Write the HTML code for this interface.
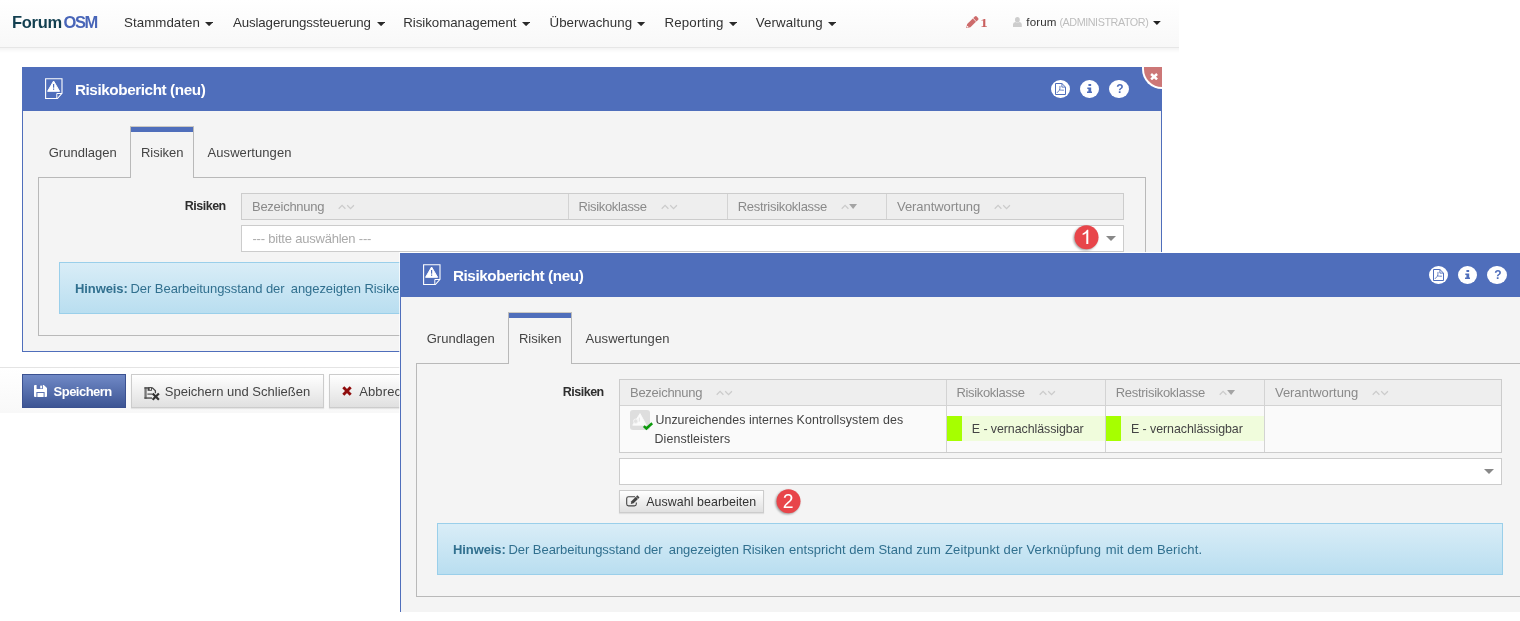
<!DOCTYPE html>
<html lang="de">
<head>
<meta charset="utf-8">
<title>ForumOSM - Risikobericht (neu)</title>
<style>
html,body{margin:0;padding:0;background:#fff}
body{width:1520px;height:621px;position:relative;overflow:hidden;font-family:"Liberation Sans",sans-serif}
.a{position:absolute;box-sizing:border-box;margin:0;padding:0}
.t{position:absolute;white-space:nowrap;line-height:1;display:block}
#shot1{will-change:transform;left:0;top:0;width:1179px;height:413px;overflow:hidden;background:#fff}
#shot2{will-change:transform;left:399px;top:252px;width:1121px;height:360px;overflow:hidden;background:#f4f4f4;background-clip:padding-box;border-left:1px solid rgba(255,255,255,.7);border-top:1px solid rgba(255,255,255,.95)}
.navbar{left:-10px;top:0;width:1210px;height:48px;background:linear-gradient(#fff,#f8f8f8);border-bottom:1px solid #e6e6e6;box-shadow:0 1px 5px rgba(0,0,0,.075)}
.panel{background:#f4f4f4;border:1px solid #4f6ebb;border-top:0;box-sizing:content-box}
.phead{background:#4f6ebb}
.circ{border-radius:50%;background:#fff}
.xbtn{width:20px;height:22px;background:#cc7777;border:2px solid #fff;border-top:0;border-right:0;border-radius:0 0 0 20px}
.cbox{border:1px solid #b9b9b9;box-sizing:content-box}
.tab{width:64px;height:52px;background:#f4f4f4;border:1px solid #b9b9b9;border-top-color:#cbc8c2;border-bottom:0}
.tab::before{content:"";display:block;height:5px;background:#4f6ebb}
.tbl{border:1px solid #ccc;background:#fafafa;box-sizing:content-box}
.thead{background:#eee}
.vsep{width:1px;background:#d3d3d3}
.hsep{height:1px;background:#d3d3d3}
.sel{width:883px;height:27px;background:#fff;border:1px solid #ccc}
.alert{background:linear-gradient(#d9edf7,#b9def0);border:1px solid #9acfea;box-sizing:content-box}
.bdg{overflow:visible;filter:drop-shadow(-0.5px 1.5px 1.2px rgba(0,0,0,.38))}
.fbar{left:0;top:367px;width:1179px;height:46px;background:linear-gradient(#fff,#f8f8f8);border-top:1px solid #e4e4e4}
.btn,.btnp{font-family:inherit;padding:0;text-align:left;overflow:hidden}
.btn{background:linear-gradient(#fff,#e0e0e0);border:1px solid #ccc;box-shadow:0 1px 1px rgba(0,0,0,.08)}
.btnp{background:linear-gradient(#7089c6,#3d5594);border:1px solid #3b5190}
.ricon{width:20px;height:20px;background:#dedede;border-radius:3px}
.rk{width:158px;height:25px;background:#f0fcdc}
.rkbar{width:15px;height:25px;background:#a6ff00}
</style>
</head>
<body>
<main class="a" id="shot1">
<nav>
<div class="a navbar"></div>
<span class="t" style="left:12.10px;top:13.60px;font-size:16.5px;font-weight:bold;color:#123f50;letter-spacing:-0.318px">Forum</span>
<span class="t" style="left:63.60px;top:13.60px;font-size:16.5px;font-weight:bold;color:#4865b8;letter-spacing:-1.425px">OSM</span>
<span class="t" style="left:124.00px;top:16.00px;font-size:13.3px;color:#333;letter-spacing:0.056px">Stammdaten</span>
<svg class="a" style="left:205px;top:21.8px" width="8.2" height="4.2" viewBox="0 0 8.2 4.2"><path d="M0 0H8.2L4.1 4.2Z" fill="#2a2a2a"/></svg>
<span class="t" style="left:233.00px;top:16.00px;font-size:13.3px;color:#333;letter-spacing:-0.129px">Auslagerungssteuerung</span>
<svg class="a" style="left:376.5px;top:21.8px" width="8.2" height="4.2" viewBox="0 0 8.2 4.2"><path d="M0 0H8.2L4.1 4.2Z" fill="#2a2a2a"/></svg>
<span class="t" style="left:403.25px;top:16.00px;font-size:13.3px;color:#333;letter-spacing:-0.042px">Risikomanagement</span>
<svg class="a" style="left:522.3px;top:21.8px" width="8.2" height="4.2" viewBox="0 0 8.2 4.2"><path d="M0 0H8.2L4.1 4.2Z" fill="#2a2a2a"/></svg>
<span class="t" style="left:549.50px;top:16.00px;font-size:13.3px;color:#333;letter-spacing:0.058px">Überwachung</span>
<svg class="a" style="left:637.4px;top:21.8px" width="8.2" height="4.2" viewBox="0 0 8.2 4.2"><path d="M0 0H8.2L4.1 4.2Z" fill="#2a2a2a"/></svg>
<span class="t" style="left:664.50px;top:16.00px;font-size:13.3px;color:#333;letter-spacing:0.155px">Reporting</span>
<svg class="a" style="left:728.5px;top:21.8px" width="8.2" height="4.2" viewBox="0 0 8.2 4.2"><path d="M0 0H8.2L4.1 4.2Z" fill="#2a2a2a"/></svg>
<span class="t" style="left:755.70px;top:16.00px;font-size:13.3px;color:#333;letter-spacing:0.133px">Verwaltung</span>
<svg class="a" style="left:827.6px;top:21.8px" width="8.2" height="4.2" viewBox="0 0 8.2 4.2"><path d="M0 0H8.2L4.1 4.2Z" fill="#2a2a2a"/></svg>
<svg class="a" style="left:966px;top:15.7px" width="13" height="12.4" viewBox="0 0 13 12.4"><g transform="translate(0.2 12.1) rotate(-44)" fill="#cd6b6b"><path d="M0 0L3.6 -2.3H11.4V2.3H3.6Z"/><path d="M12 -2.3H14.2Q15.6 -2.3 15.6 -0.9V0.9Q15.6 2.3 14.2 2.3H12Z"/><circle cx="1.9" cy="0" r="0.75" fill="#fff"/></g></svg>
<span class="t" style="left:981.35px;top:17.20px;font-size:12.4px;font-weight:bold;font-family:'Liberation Serif', serif;color:#c9605f;letter-spacing:0.000px;transform:scaleX(1.22);transform-origin:50% 50%">1</span>
<svg class="a" style="left:1013px;top:17px" width="9" height="10" viewBox="0 0 9 10"><ellipse cx="4.4" cy="2.7" rx="2.4" ry="2.7" fill="#cdcdcd"/><path d="M0 9.9V7.6Q0 5.2 2.4 4.9Q4.4 6.3 6.4 4.9Q8.8 5.2 8.8 7.6V9.9Z" fill="#cdcdcd"/></svg>
<span class="t" style="left:1026.30px;top:16.00px;font-size:11.6px;color:#333;letter-spacing:0.129px">forum</span>
<span class="t" style="left:1059.40px;top:17.00px;font-size:10.8px;color:#bdbdbd;letter-spacing:-0.442px">(ADMINISTRATOR)</span>
<svg class="a" style="left:1153.2px;top:21.1px" width="7.8" height="4" viewBox="0 0 7.8 4"><path d="M0 0H7.8L3.9 4Z" fill="#222"/></svg>
</nav>
<section>
<div class="a panel" style="left:22px;top:110px;width:1138px;height:241px"></div>
<div class="a phead" style="left:22px;top:67px;width:1140px;height:44px"></div>
<svg class="a" style="left:45px;top:78px" width="18" height="22" viewBox="0 0 18 22"><path d="M0.6 0.7H17V15.4L12.4 20.5H0.6Z" fill="none" stroke="#fff" stroke-width="1.1"/><path d="M17 15.5H11.8V20" fill="none" stroke="#fff" stroke-width="1"/><path d="M8.6 3L14.6 13.3H2.6Z" fill="#fff" stroke="#fff" stroke-width="1" stroke-linejoin="round"/><rect x="8" y="6" width="1.2" height="3.7" fill="#4f6ebb"/><rect x="8" y="10.5" width="1.2" height="1.3" fill="#4f6ebb"/></svg>
<span class="t" style="left:74.90px;top:81.80px;font-size:15.3px;font-weight:bold;color:#fff;letter-spacing:-0.425px">Risikobericht (neu)</span>
<div class="a circ" style="left:1050.7px;top:79.65px;width:19.4px;height:18.6px"></div>
<div class="a circ" style="left:1079.7px;top:79.65px;width:19.4px;height:18.6px"></div>
<div class="a circ" style="left:1108.95px;top:79.65px;width:20px;height:18.6px"></div>
<svg class="a" style="left:1055px;top:83px" width="11" height="12" viewBox="0 0 11 12"><path d="M0.5 0.5H6.9L10.5 4.1V11.5H0.5Z" fill="none" stroke="#4f6ebb" stroke-width="1"/><path d="M6.9 0.5V4.1H10.5" fill="none" stroke="#4f6ebb" stroke-width="0.9"/><path d="M1.9 9.9L4.4 7.2Q5.1 5.6 5 2.9M4.6 6.9Q6.4 7.3 8.9 7.2" fill="none" stroke="#4f6ebb" stroke-width="0.85"/></svg>
<svg class="a" style="left:1086.9px;top:83.8px" width="5.4" height="9.3" viewBox="0 0 5.4 9.3"><rect x="1.4" y="0" width="2.8" height="1.9" rx="0.3" fill="#4f6ebb"/><path d="M0.3 3.5H4.2V7.5H5.4V9.3H0V7.5H1.4V5.1H0.3Z" fill="#4f6ebb"/></svg>
<span class="t" style="left:1116.27px;top:83.06px;font-size:12px;font-weight:bold;color:#4f6ebb;letter-spacing:0.000px">?</span>
<div class="a xbtn" style="left:1142px;top:67px"></div>
<svg class="a" style="left:1150px;top:72.9px" width="8.2" height="7.4" viewBox="0 0 8.2 7.4"><path d="M1.1 1L7.1 6.4M7.1 1L1.1 6.4" stroke="#fff" stroke-width="2.5"/></svg>
<div class="a cbox" style="left:38px;top:177px;width:1106px;height:157px"></div>
<div class="a tab" style="left:130px;top:126px"></div>
<span class="t" style="left:48.75px;top:146.00px;font-size:13px;color:#444;letter-spacing:0.003px">Grundlagen</span>
<span class="t" style="left:141.00px;top:146.00px;font-size:13px;color:#444;letter-spacing:-0.024px">Risiken</span>
<span class="t" style="left:207.50px;top:146.00px;font-size:13px;color:#444;letter-spacing:0.078px">Auswertungen</span>
<span class="t" style="left:184.80px;top:200.00px;font-size:12.5px;font-weight:bold;color:#2e2e2e;letter-spacing:-0.506px">Risiken</span>
<div class="a tbl" style="left:241px;top:193px;width:881px;height:25px"></div>
<div class="a thead" style="left:242px;top:194px;width:881px;height:25px"></div>
<div class="a vsep" style="left:568px;top:194px;height:25px"></div>
<div class="a vsep" style="left:727px;top:194px;height:25px"></div>
<div class="a vsep" style="left:886px;top:194px;height:25px"></div>
<span class="t" style="left:252.00px;top:200.00px;font-size:13px;color:#8a8a8a;letter-spacing:-0.269px">Bezeichnung</span>
<svg class="a" style="left:337.5px;top:201px" width="17" height="10" viewBox="0 0 17 10"><path d="M0.7 7.7L4.05 4.3L7.4 7.7" fill="none" stroke="#cbcbcb" stroke-width="1.25"/><path d="M9.2 4.3L12.55 7.7L15.9 4.3" fill="none" stroke="#cbcbcb" stroke-width="1.25"/></svg>
<span class="t" style="left:578.50px;top:200.00px;font-size:13px;color:#8a8a8a;letter-spacing:-0.343px">Risikoklasse</span>
<svg class="a" style="left:661px;top:201px" width="17" height="10" viewBox="0 0 17 10"><path d="M0.7 7.7L4.05 4.3L7.4 7.7" fill="none" stroke="#cbcbcb" stroke-width="1.25"/><path d="M9.2 4.3L12.55 7.7L15.9 4.3" fill="none" stroke="#cbcbcb" stroke-width="1.25"/></svg>
<span class="t" style="left:737.75px;top:200.00px;font-size:13px;color:#8a8a8a;letter-spacing:-0.296px">Restrisikoklasse</span>
<svg class="a" style="left:841px;top:201px" width="17" height="10" viewBox="0 0 17 10"><path d="M0.7 7.7L4.05 4.3L7.4 7.7" fill="none" stroke="#cbcbcb" stroke-width="1.25"/><path d="M8.1 2.9H16.05L12.1 7.9Z" fill="#a4a4a4"/></svg>
<span class="t" style="left:897.00px;top:200.00px;font-size:13px;color:#8a8a8a;letter-spacing:-0.051px">Verantwortung</span>
<svg class="a" style="left:993.5px;top:201px" width="17" height="10" viewBox="0 0 17 10"><path d="M0.7 7.7L4.05 4.3L7.4 7.7" fill="none" stroke="#cbcbcb" stroke-width="1.25"/><path d="M9.2 4.3L12.55 7.7L15.9 4.3" fill="none" stroke="#cbcbcb" stroke-width="1.25"/></svg>
<div class="a sel" style="left:241px;top:225px"></div>
<span class="t" style="left:252.50px;top:231.50px;font-size:13px;color:#aaa;letter-spacing:-0.214px">--- bitte auswählen ---</span>
<svg class="a" style="left:1106.3px;top:236.3px" width="10" height="5" viewBox="0 0 10 5"><path d="M0 0H10L5 5Z" fill="#888"/></svg>
<div class="a alert" style="left:59px;top:262px;width:1064px;height:50px"></div>
<span class="t" style="left:75.00px;top:282.00px;font-size:13px;font-weight:bold;color:#31708f;letter-spacing:-0.091px">Hinweis:</span>
<span class="t" style="left:130.50px;top:282.00px;font-size:13px;color:#31708f;letter-spacing:-0.054px">Der Bearbeitungsstand der</span>
<span class="t" style="left:290.75px;top:282.00px;font-size:13px;color:#31708f;letter-spacing:-0.061px">angezeigten Risiken</span>
<span class="t" style="left:411.00px;top:282.00px;font-size:13px;color:#31708f;letter-spacing:0.035px">entspricht dem Stand zum</span>
<span class="t" style="left:567.00px;top:282.00px;font-size:13px;color:#31708f;letter-spacing:0.145px">Zeitpunkt der Verknüpfung</span>
<span class="t" style="left:727.75px;top:282.00px;font-size:13px;color:#31708f;letter-spacing:0.163px">mit dem Bericht.</span>
<svg class="a bdg" style="left:1072px;top:223px" width="30" height="31" viewBox="0 0 30 31"><circle cx="14.50" cy="14.30" r="12.00" fill="#e8454a"/><path transform="translate(10.60 6.70)" d="M5.7 14.2H3.7V3.2Q2.4 4.5 0 5.4V3.7Q3.2 2.3 4.5 0H5.7Z" fill="#fff"/></svg>
</section>
<footer>
<div class="a fbar"></div>
<button class="a btnp" style="left:22px;top:374px;width:104px;height:34px">
<svg class="a" style="left:11px;top:10px" width="13" height="12" viewBox="0 0 13 12"><path d="M0 1Q0 0 1 0H9.8L13 3V11Q13 12 12 12H1Q0 12 0 11Z" fill="#fff"/><rect x="2.6" y="0" width="6.2" height="4" fill="#5a72b2"/><rect x="6.2" y="0.6" width="1.8" height="2.8" fill="#fff"/><rect x="2.4" y="7" width="8.2" height="5" fill="#5a72b2"/><rect x="3.4" y="8" width="6.2" height="4" fill="#fff"/></svg>
<span class="t" style="left:30.60px;top:9.80px;font-size:13px;font-weight:bold;color:#fff;letter-spacing:-0.527px">Speichern</span>
</button>
<button class="a btn" style="left:131px;top:374px;width:193px;height:34px">
<svg class="a" style="left:12px;top:12px" width="16" height="14" viewBox="0 0 16 14"><rect x="0.4" y="0.3" width="2.3" height="11.4" fill="#777"/><rect x="0.4" y="0.3" width="8.4" height="1.3" fill="#444"/><path d="M8.5 0.9L11.4 3.7V6.2" fill="none" stroke="#444" stroke-width="1.3"/><rect x="3.6" y="0.3" width="4.3" height="3.5" fill="#444"/><rect x="5.7" y="1" width="1.2" height="2" fill="#eee"/><rect x="0.4" y="10.4" width="7.6" height="1.3" fill="#444"/><rect x="3.4" y="6.5" width="4.8" height="1.2" fill="#555"/><path d="M8.6 6.5L14.9 12.8M14.9 6.5L8.6 12.8" stroke="#333" stroke-width="2.2"/></svg>
<span class="t" style="left:32.80px;top:9.80px;font-size:13px;color:#444;letter-spacing:0.007px">Speichern und Schließen</span>
</button>
<button class="a btn" style="left:329px;top:374px;width:110px;height:34px">
<svg class="a" style="left:12.3px;top:11px" width="10" height="10" viewBox="0 0 10 10"><path d="M1.3 1.3L8.7 8.7M8.7 1.3L1.3 8.7" stroke="#8f0c0c" stroke-width="2.9"/></svg>
<span class="t" style="left:29.20px;top:9.80px;font-size:13px;color:#444;letter-spacing:0.142px">Abbrechen</span>
</button>
</footer>
</main>
<aside class="a" id="shot2">
<section>
<div class="a panel" style="left:0px;top:43px;width:1138px;height:600px"></div>
<div class="a phead" style="left:0px;top:0px;width:1140px;height:44px"></div>
<svg class="a" style="left:23px;top:11px" width="18" height="22" viewBox="0 0 18 22"><path d="M0.6 0.7H17V15.4L12.4 20.5H0.6Z" fill="none" stroke="#fff" stroke-width="1.1"/><path d="M17 15.5H11.8V20" fill="none" stroke="#fff" stroke-width="1"/><path d="M8.6 3L14.6 13.3H2.6Z" fill="#fff" stroke="#fff" stroke-width="1" stroke-linejoin="round"/><rect x="8" y="6" width="1.2" height="3.7" fill="#4f6ebb"/><rect x="8" y="10.5" width="1.2" height="1.3" fill="#4f6ebb"/></svg>
<span class="t" style="left:52.90px;top:14.80px;font-size:15.3px;font-weight:bold;color:#fff;letter-spacing:-0.425px">Risikobericht (neu)</span>
<div class="a circ" style="left:1028.7px;top:12.65px;width:19.4px;height:18.6px"></div>
<div class="a circ" style="left:1057.7px;top:12.65px;width:19.4px;height:18.6px"></div>
<div class="a circ" style="left:1086.95px;top:12.65px;width:20px;height:18.6px"></div>
<svg class="a" style="left:1033px;top:16px" width="11" height="12" viewBox="0 0 11 12"><path d="M0.5 0.5H6.9L10.5 4.1V11.5H0.5Z" fill="none" stroke="#4f6ebb" stroke-width="1"/><path d="M6.9 0.5V4.1H10.5" fill="none" stroke="#4f6ebb" stroke-width="0.9"/><path d="M1.9 9.9L4.4 7.2Q5.1 5.6 5 2.9M4.6 6.9Q6.4 7.3 8.9 7.2" fill="none" stroke="#4f6ebb" stroke-width="0.85"/></svg>
<svg class="a" style="left:1064.9px;top:16.8px" width="5.4" height="9.3" viewBox="0 0 5.4 9.3"><rect x="1.4" y="0" width="2.8" height="1.9" rx="0.3" fill="#4f6ebb"/><path d="M0.3 3.5H4.2V7.5H5.4V9.3H0V7.5H1.4V5.1H0.3Z" fill="#4f6ebb"/></svg>
<span class="t" style="left:1094.27px;top:16.06px;font-size:12px;font-weight:bold;color:#4f6ebb;letter-spacing:0.000px">?</span>
<div class="a cbox" style="left:16px;top:110px;width:1106px;height:232px"></div>
<div class="a tab" style="left:108px;top:59px"></div>
<span class="t" style="left:26.75px;top:79.00px;font-size:13px;color:#444;letter-spacing:0.003px">Grundlagen</span>
<span class="t" style="left:119.00px;top:79.00px;font-size:13px;color:#444;letter-spacing:-0.024px">Risiken</span>
<span class="t" style="left:185.50px;top:79.00px;font-size:13px;color:#444;letter-spacing:0.078px">Auswertungen</span>
<span class="t" style="left:162.80px;top:133.00px;font-size:12.5px;font-weight:bold;color:#2e2e2e;letter-spacing:-0.506px">Risiken</span>
<div class="a tbl" style="left:219px;top:126px;width:881px;height:72px"></div>
<div class="a thead" style="left:220px;top:127px;width:881px;height:25px"></div>
<div class="a vsep" style="left:546px;top:127px;height:72px"></div>
<div class="a vsep" style="left:705px;top:127px;height:72px"></div>
<div class="a vsep" style="left:864px;top:127px;height:72px"></div>
<div class="a hsep" style="left:220px;top:152px;width:881px"></div>
<span class="t" style="left:230.00px;top:133.00px;font-size:13px;color:#8a8a8a;letter-spacing:-0.269px">Bezeichnung</span>
<svg class="a" style="left:315.5px;top:134px" width="17" height="10" viewBox="0 0 17 10"><path d="M0.7 7.7L4.05 4.3L7.4 7.7" fill="none" stroke="#cbcbcb" stroke-width="1.25"/><path d="M9.2 4.3L12.55 7.7L15.9 4.3" fill="none" stroke="#cbcbcb" stroke-width="1.25"/></svg>
<span class="t" style="left:556.50px;top:133.00px;font-size:13px;color:#8a8a8a;letter-spacing:-0.343px">Risikoklasse</span>
<svg class="a" style="left:639px;top:134px" width="17" height="10" viewBox="0 0 17 10"><path d="M0.7 7.7L4.05 4.3L7.4 7.7" fill="none" stroke="#cbcbcb" stroke-width="1.25"/><path d="M9.2 4.3L12.55 7.7L15.9 4.3" fill="none" stroke="#cbcbcb" stroke-width="1.25"/></svg>
<span class="t" style="left:715.75px;top:133.00px;font-size:13px;color:#8a8a8a;letter-spacing:-0.296px">Restrisikoklasse</span>
<svg class="a" style="left:819px;top:134px" width="17" height="10" viewBox="0 0 17 10"><path d="M0.7 7.7L4.05 4.3L7.4 7.7" fill="none" stroke="#cbcbcb" stroke-width="1.25"/><path d="M8.1 2.9H16.05L12.1 7.9Z" fill="#a4a4a4"/></svg>
<span class="t" style="left:875.00px;top:133.00px;font-size:13px;color:#8a8a8a;letter-spacing:-0.051px">Verantwortung</span>
<svg class="a" style="left:971.5px;top:134px" width="17" height="10" viewBox="0 0 17 10"><path d="M0.7 7.7L4.05 4.3L7.4 7.7" fill="none" stroke="#cbcbcb" stroke-width="1.25"/><path d="M9.2 4.3L12.55 7.7L15.9 4.3" fill="none" stroke="#cbcbcb" stroke-width="1.25"/></svg>
<div class="a ricon" style="left:230px;top:157px"></div>
<svg class="a" style="left:230px;top:156px" width="24" height="22" viewBox="0 0 24 22"><path d="M10 4.6L16.4 16.2H2.7Z" fill="#fbfbfb" stroke="#fbfbfb" stroke-width="0.8" stroke-linejoin="round"/><circle cx="5.7" cy="12.2" r="2.2" fill="#e2e2e2" stroke="#f4f4f4" stroke-width="1"/><path d="M9.3 8.6V12.6" stroke="#e4e4e4" stroke-width="1"/><path d="M13.8 17.1L16.4 19.5L22.2 14.3" fill="none" stroke="#0c9a0c" stroke-width="2.5"/></svg>
<span class="t" style="left:255.50px;top:161.25px;font-size:12.4px;color:#444;letter-spacing:0.028px">Unzureichendes internes</span>
<span class="t" style="left:396.50px;top:161.25px;font-size:12.4px;color:#444;letter-spacing:0.118px">Kontrollsystem des</span>
<span class="t" style="left:254.50px;top:180.00px;font-size:12.4px;color:#444;letter-spacing:0.102px">Dienstleisters</span>
<div class="a rk" style="left:547px;top:162.5px"></div>
<div class="a rkbar" style="left:547px;top:162.5px"></div>
<div class="a rk" style="left:706px;top:162.5px"></div>
<div class="a rkbar" style="left:706px;top:162.5px"></div>
<span class="t" style="left:571.80px;top:170.20px;font-size:12.4px;color:#444;letter-spacing:-0.059px">E - vernachlässigbar</span>
<span class="t" style="left:731.00px;top:170.20px;font-size:12.4px;color:#444;letter-spacing:-0.059px">E - vernachlässigbar</span>
<div class="a sel" style="left:219px;top:205px"></div>
<svg class="a" style="left:1084.3px;top:216.3px" width="10" height="5" viewBox="0 0 10 5"><path d="M0 0H10L5 5Z" fill="#888"/></svg>
<button class="a btn" style="left:219px;top:237px;width:145px;height:23px">
<svg class="a" style="left:6px;top:4.2px" width="14" height="12" viewBox="0 0 14 12"><path d="M9 1.7H2.6Q0.7 1.7 0.7 3.6V9Q0.7 10.9 2.6 10.9H8.4Q10.3 10.9 10.3 9V7.6" fill="none" stroke="#444" stroke-width="1.1"/><path d="M11.4 0.3L13.5 2.4L7.6 8.3L4.8 8.9L5.4 6.2Z" fill="#444"/><path d="M10.2 1.9L12 3.7" stroke="#f4f4f4" stroke-width="0.6"/></svg>
<span class="t" style="left:26.25px;top:5.25px;font-size:12.4px;color:#333;letter-spacing:0.062px">Auswahl bearbeiten</span>
</button>
<svg class="a bdg" style="left:374px;top:234px" width="30" height="31" viewBox="0 0 30 31"><circle cx="14.50" cy="14.35" r="12.00" fill="#e8454a"/></svg><span class="t" style="left:382.72px;top:238.90px;font-size:19.4px;color:#fff;letter-spacing:0.000px">2</span>
<div class="a alert" style="left:37px;top:270px;width:1064px;height:50px"></div>
<span class="t" style="left:53.00px;top:290.00px;font-size:13px;font-weight:bold;color:#31708f;letter-spacing:-0.091px">Hinweis:</span>
<span class="t" style="left:108.50px;top:290.00px;font-size:13px;color:#31708f;letter-spacing:-0.054px">Der Bearbeitungsstand der</span>
<span class="t" style="left:268.75px;top:290.00px;font-size:13px;color:#31708f;letter-spacing:-0.061px">angezeigten Risiken</span>
<span class="t" style="left:389.00px;top:290.00px;font-size:13px;color:#31708f;letter-spacing:0.035px">entspricht dem Stand zum</span>
<span class="t" style="left:545.00px;top:290.00px;font-size:13px;color:#31708f;letter-spacing:0.145px">Zeitpunkt der Verknüpfung</span>
<span class="t" style="left:705.75px;top:290.00px;font-size:13px;color:#31708f;letter-spacing:0.163px">mit dem Bericht.</span>
</section>
</aside>
</body>
</html>
